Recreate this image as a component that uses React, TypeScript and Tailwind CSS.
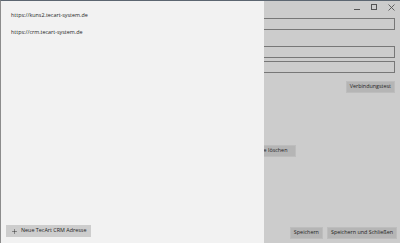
import { Plus } from "lucide-react";

function WinButton({ label, className = "" }: { label: string; className?: string }) {
  return (
    <button
      className={`h-[12px] px-[3px] bg-[#b5b5b5] border border-[#bdbdbd] text-[5.4px] leading-none text-[#1f1f1f] ${className}`}
    >
      {label}
    </button>
  );
}

function Field() {
  return <div className="h-[12px] w-full border-[1.5px] border-[#777777] bg-[#cccccc]" />;
}

export default function App() {
  return (
    <div
      className="relative w-[400px] h-[243px] overflow-hidden bg-[#cccccc] border-t border-l border-t-[#5c6671] border-l-[#8c8c8c] text-[#1f1f1f]"
      style={{ fontFamily: '"Open Sans", "Noto Sans", sans-serif' }}
    >
      {/* window chrome */}
      <div className="flex h-[17px] items-start justify-end gap-[11px] pr-[5px] pt-[3px]">
        <div className="mt-[5px] h-px w-[6px] bg-[#555]" />
        <div className="h-[6px] w-[6px] border border-[#555]" />
        <svg width="7" height="7" viewBox="0 0 7 7">
          <path d="M0.5 0.5 L6.5 6.5 M6.5 0.5 L0.5 6.5" stroke="#555" strokeWidth="0.9" />
        </svg>
      </div>

      {/* dialog content (mostly covered by the flyout) */}
      <div className="flex flex-col pl-[110px] pr-[5px]">
        <Field />
        <div className="h-[16px]" />
        <Field />
        <div className="h-[3px]" />
        <Field />
        <div className="mt-[8px] flex justify-end">
          <WinButton label="Verbindungstest" />
        </div>
        <div className="mt-[52px] flex">
          <WinButton label="Adresse löschen" className="ml-[127px] w-[58px]" />
        </div>
        <div className="mt-[70px] mr-[-2px] flex justify-end gap-[4px]">
          <WinButton label="Speichern" />
          <WinButton label="Speichern und Schließen" />
        </div>
      </div>

      {/* flyout list */}
      <div className="absolute left-0 top-0 bottom-0 flex w-[263px] flex-col bg-[#f2f2f2]">
        <ul className="flex flex-col gap-[10px] pl-[10px] pt-[11px] text-[5.4px] leading-[7px] text-[#262626]">
          <li>https://kuns2.tecart-system.de</li>
          <li>https://crm.tecart-system.de</li>
        </ul>
        <div className="mt-auto mb-[6px] ml-[5px] flex">
          <button className="flex h-[12px] items-center gap-[3px] bg-[#cdcdcd] px-[5px] text-[5.4px] leading-none text-[#1f1f1f]">
            <Plus size={7} strokeWidth={1.5} />
            Neue TecArt CRM Adresse
          </button>
        </div>
      </div>
    </div>
  );
}
